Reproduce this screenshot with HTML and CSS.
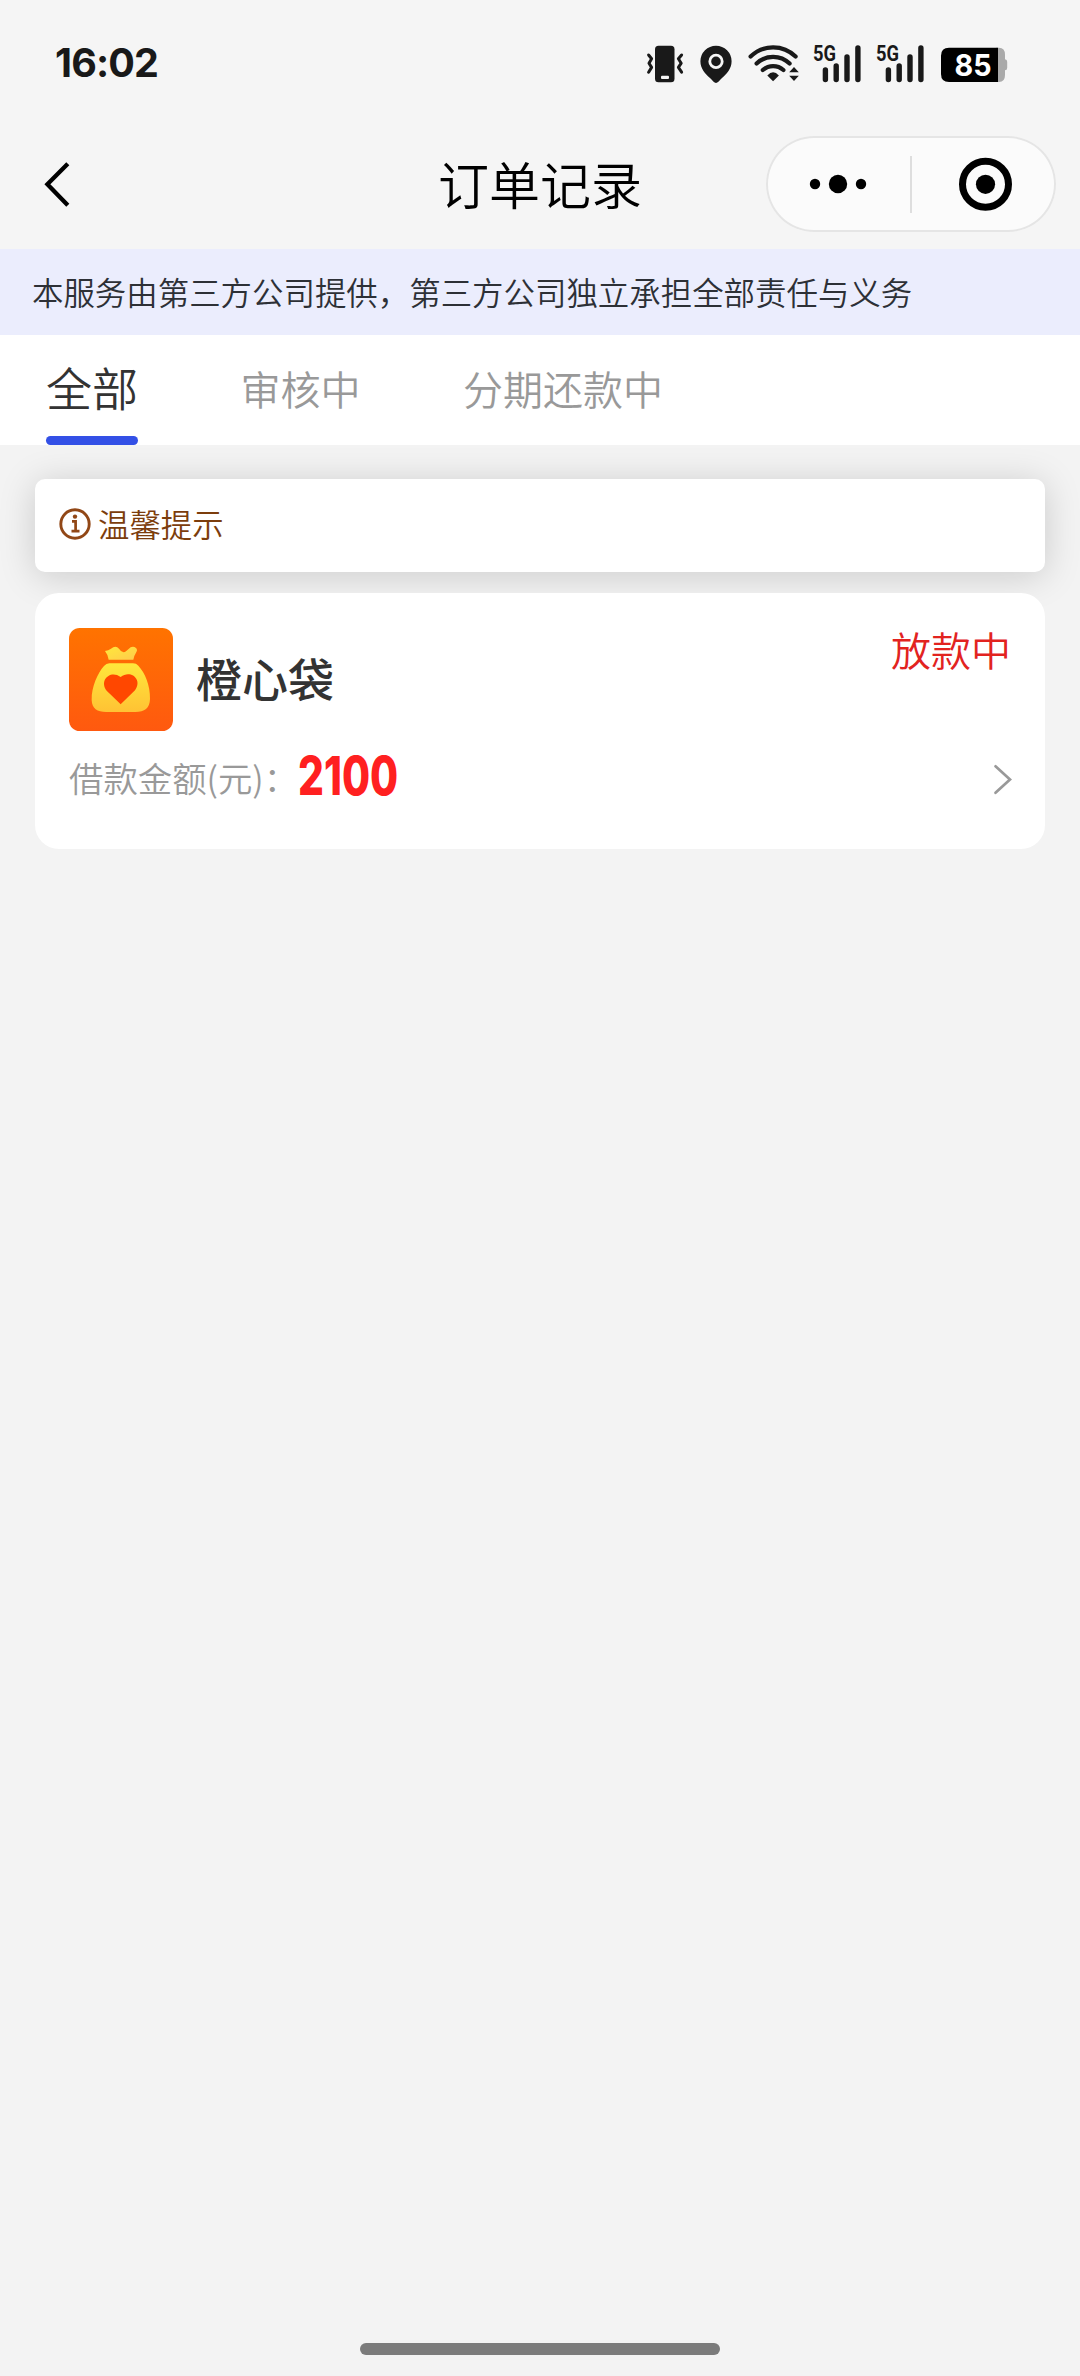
FILE: index.html
```html
<!DOCTYPE html>
<html lang="zh-CN">
<head>
<meta charset="utf-8">
<title>订单记录</title>
<link rel="stylesheet" href="styles.css">
</head>
<body>
<div class="screen">
  <header class="status-bar">
    <span class="clock">16:02</span>
    <div class="status-icons">
      <svg class="vibrate" width="38" height="40" viewBox="646 44 38 40">
        <rect x="655" y="45.7" width="19.5" height="36.6" rx="3.5" fill="#191919"/>
        <rect x="661" y="75.7" width="8" height="3.2" rx="1" fill="#f5f5f5"/>
        <path d="M648.6 55l3 3.8-2.6 4.4 2.6 4.2-3 4.8M681.6 55l-3.2 3.8 2.8 4.4-2.8 4.2 3.2 4.8" fill="none" stroke="#191919" stroke-width="3" stroke-linecap="round" stroke-linejoin="round"/>
      </svg>
      <svg class="pin" width="32" height="40" viewBox="700 44 32 40">
        <path d="M716 83C714.3 83 712.500 80.500 710 78C705.500 73.700 700.400 69 700.400 61.200A15.600 15.600 0 0 1 731.600 61.200C731.600 69 726.500 73.700 722 78C719.500 80.500 717.700 83 716 83Z" fill="#191919"/>
        <circle cx="716" cy="61.400" r="6.200" fill="#191919" stroke="#f5f5f5" stroke-width="2.800"/>
      </svg>
      <svg class="wifi" width="52" height="40" viewBox="748 44 52 40">
        <g fill="none" stroke="#191919" stroke-width="4.200" stroke-linecap="round">
          <path d="M750.600 56.600A32 32 0 0 1 795.600 56.600"/>
          <path d="M756.600 63.600A23.500 23.500 0 0 1 789.600 63.600"/>
          <path d="M762.800 70A15.500 15.500 0 0 1 783.400 70"/>
        </g>
        <path d="M767.300 75.400Q773.100 69 778.900 75.400L773.100 81.200Z" fill="#191919"/>
        <path d="M794 67l4.800 5.300h-9.600zM794 81l4.800-5.300h-9.600z" fill="#191919"/>
      </svg>
      <svg class="signal" width="54" height="56" viewBox="810 36 54 56">
        <text class="net" x="813" y="60.900" textLength="23" lengthAdjust="spacingAndGlyphs">5G</text>
        <path d="M825.400 70v9.600M836.200 66v13.600M847 57v22.600M857.900 48v31.600" class="bars"/>
      </svg>
      <svg class="signal second" width="54" height="56" viewBox="810 36 54 56">
        <text class="net" x="813" y="60.900" textLength="23" lengthAdjust="spacingAndGlyphs">5G</text>
        <path d="M825.400 70v9.600M836.200 66v13.600M847 57v22.600M857.900 48v31.600" class="bars"/>
      </svg>
      <svg class="battery" width="68" height="40" viewBox="940 44 68 40">
        <path d="M996 47.700h3q6 0 6 7v4.500q2.200 0 2.200 2.500v6q0 2.500-2.200 2.500v4.800q0 7-6 7h-3z" fill="#aaa"/>
        <path d="M998 47.700v34.300h-49q-8 0-8-8v-18.300q0-8 8-8z" fill="#000"/>
        <text class="level" x="954.500" y="75.800" textLength="37" lengthAdjust="spacingAndGlyphs">85</text>
      </svg>
    </div>
  </header>

  <nav class="nav-bar">
    <svg class="back" width="28" height="48" viewBox="44 160 28 48"><path d="M67.800 163.700L47.400 184.300L67.800 205.300" fill="none" stroke="#000" stroke-width="4.300"/></svg>
    <h1 class="title">订单记录</h1>
    <div class="capsule">
      <svg width="290" height="96" viewBox="766 136 290 96">
        <circle cx="815" cy="184" r="5.200"/><circle cx="838" cy="184" r="9.200"/><circle cx="861" cy="184" r="5.200"/>
        <path d="M911 156v57" stroke="#dedede" stroke-width="2"/>
        <circle cx="985.500" cy="184.300" r="23" fill="none" stroke="#000" stroke-width="7"/>
        <circle cx="985.500" cy="184.300" r="9.600"/>
      </svg>
    </div>
  </nav>

  <p class="banner">本服务由第三方公司提供，第三方公司独立承担全部责任与义务</p>

  <div class="tabs">
    <span class="tab active">全部</span>
    <span class="tab">审核中</span>
    <span class="tab">分期还款中</span>
  </div>

  <main class="content">
    <section class="tip">
      <svg width="32" height="32" viewBox="59 508 32 32">
        <circle cx="75" cy="524" r="14.200" fill="none" stroke="#914716" stroke-width="2.900"/>
        <circle cx="75" cy="516.600" r="2.200" fill="#914716"/>
        <path d="M72 521.300h3.600v9.700M71.500 531.200h8" fill="none" stroke="#914716" stroke-width="2.700"/>
      </svg>
      <span>温馨提示</span>
    </section>

    <article class="order">
      <div class="order-head">
        <svg class="logo" width="104" height="103" viewBox="117 114 312 309">
          <defs>
            <linearGradient id="tile" x1="0" y1="0" x2="0" y2="1"><stop offset="0" stop-color="#ff7300"/><stop offset="1" stop-color="#ff590f"/></linearGradient>
            <linearGradient id="bag" x1="0" y1="0" x2="0" y2="1"><stop offset="0" stop-color="#ffe83b"/><stop offset="1" stop-color="#ffc234"/></linearGradient>
            <linearGradient id="knot" x1="0" y1="0" x2="1" y2="1"><stop offset="0" stop-color="#ffe83b"/><stop offset="1" stop-color="#ffcb4c"/></linearGradient>
          </defs>
          <rect x="117" y="114" width="312" height="309" rx="32" fill="url(#tile)"/>
          <path d="M225 183Q235 181 243 176Q257 165 267 176Q277 192 288 184L302 172Q310 167 318 174Q324 180 318 188Q313 195 310 209H236Q235 196 225 183Z" fill="url(#knot)"/>
          <path d="M238 220H309Q319 220 325 227C345 248 361 286 360 327C359 355 344 366 316 366H229C201 366 186 356 185 330C184 290 204 248 222 228Q229 220 238 220Z" fill="url(#bag)"/>
          <path d="M272 343L230 302C206 270 242 238 272 261C302 238 339 269 315 301Z" fill="#ff4700"/>
        </svg>
        <h2 class="name">橙心袋</h2>
        <span class="state">放款中</span>
      </div>
      <div class="order-row">
        <span class="label">借款金额(元)：</span>
        <strong class="amount">2100</strong>
        <svg class="more" width="20" height="34" viewBox="993 762 20 34"><path d="M995.500 766.300L1010 779.400L995.500 792.800" fill="none" stroke="#999" stroke-width="2.700" stroke-linecap="round"/></svg>
      </div>
    </article>
  </main>
  <div class="home-bar"></div>
</div>
</body>
</html>
```
FILE: styles.css
```css
* { box-sizing: border-box; }

body {
  margin: 0;
  background: #f3f3f3;
  font-family: "Noto Sans CJK SC", sans-serif;
  font-weight: 350;
  color: #333;
}

h1, h2, p { margin: 0; font-weight: 350; }
svg { display: block; flex: none; }

.screen {
  display: flex;
  flex-direction: column;
  width: 1080px;
  height: 2376px;
}

.status-bar {
  display: flex;
  align-items: center;
  justify-content: space-between;
  height: 128px;
  padding: 0 72px 0 55px;
  background: #f5f5f5;
}
.clock {
  font: 700 39.500px/1 Inter, sans-serif;
  letter-spacing: -0.9px;
  color: #191919;
}
.status-icons { display: flex; align-items: center; }
.pin { margin-left: 16px; }
.wifi { margin-left: 16px; }
.signal { margin-left: 10px; }
.signal.second { margin-left: 9px; }
.battery { margin-left: 13px; }
.net { font: 700 22px Roboto, sans-serif; fill: #191919; }
.bars { fill: none; stroke: #191919; stroke-width: 5.4px; stroke-linecap: round; }
.level { font: 700 30px Inter, sans-serif; fill: #fff; }

.nav-bar {
  display: grid;
  grid-template-columns: 290px 1fr 290px;
  align-items: center;
  height: 121px;
  padding: 0 24px;
  background: #f5f5f5;
}
.back { margin: -9px 0 0 20px; }
.title {
  font-size: 51px;
  line-height: 60px;
  text-align: center;
  color: #000;
  margin-top: -12px;
}
.capsule {
  width: 290px;
  height: 96px;
  margin-top: -9px;
  border-radius: 48px;
  background: #fbfbfb;
  box-shadow: inset 0 0 0 2px #e5e5e5;
}

.banner {
  height: 86px;
  padding-left: 32px;
  font-size: 31.45px;
  line-height: 85px;
  background: #ebedfd;
  color: #2d3036;
  white-space: nowrap;
}

.tabs {
  position: relative;
  z-index: 1;
  display: flex;
  gap: 102.5px;
  height: 110px;
  padding-left: 46px;
  background: #fff;
}
.tab {
  font-size: 40px;
  line-height: 107px;
  color: #999;
}
.tab.active {
  height: 110px;
  font-size: 46px;
  line-height: 102px;
  color: #333;
}
.tab.active::after {
  content: "";
  display: block;
  height: 9px;
  margin-top: -1px;
  border-radius: 4.5px;
  background: #3350e6;
}

.content {
  flex: 1;
  display: flex;
  flex-direction: column;
  gap: 21px;
  padding: 34px 35px 0;
}
.tip {
  display: flex;
  align-items: center;
  gap: 7px;
  height: 93px;
  padding: 0 24px 3px;
  border-radius: 10px;
  background: #fff;
  box-shadow: 0 4px 36px rgba(0, 0, 0, .17);
  font-size: 31.4px;
  line-height: 44px;
  color: #7c3d0c;
}
.tip span { margin-top: -1px; }

.order {
  position: relative;
  height: 256px;
  padding: 35px 34px 0;
  border-radius: 24px;
  background: #fff;
}
.order-head { display: flex; align-items: flex-start; height: 103px; }
.name {
  margin: 14px 0 0 23px;
  font-size: 46px;
  line-height: 70px;
  font-weight: 500;
}
.state {
  margin: -3px 0 0 auto;
  font-size: 40px;
  line-height: 48px;
  color: #e2231f;
}
.order-row {
  display: flex;
  align-items: center;
  height: 70px;
  margin-top: 13px;
}
.label {
  width: 229px;
  margin-top: -4px;
  font-size: 34.4px;
  line-height: 50px;
  color: #999;
  white-space: nowrap;
}
.amount {
  margin-top: -7px;
  font: 800 53.500px/60px Inter, sans-serif;
  color: #ff2020;
  transform: scaleX(.76);
  transform-origin: 0 50%;
}
.more { margin-left: auto; margin-right: -2px; }

.home-bar {
  width: 360px;
  height: 12px;
  margin: 0 auto 21px;
  border-radius: 6px;
  background: #7b7b7b;
}
```
